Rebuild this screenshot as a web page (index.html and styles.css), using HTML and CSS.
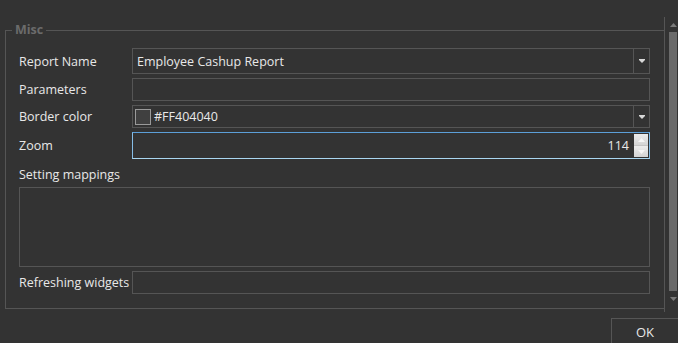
FILE: index.html
```html
<!DOCTYPE html>
<html lang="en">
<head>
    <meta charset="UTF-8">
    <title>Report Widget Properties</title>
    <link rel="stylesheet" href="styles.css">
</head>
<body>
    <div class="window">
        <div class="scroller">
            <div class="content">
                <fieldset class="group">
                    <legend>Misc</legend>
                    <div class="props">
                        <div class="prop-label">Report Name</div>
                        <div class="field combo tall">
                            <span class="value">Employee Cashup Report</span>
                            <span class="drop">
                                <svg width="6" height="4" viewBox="0 0 6 4"><path d="M0 0H6V1L3 4L0 1Z" fill="#d8d8d8"/></svg>
                            </span>
                        </div>

                        <div class="prop-label">Parameters</div>
                        <div class="field"></div>

                        <div class="prop-label">Border color</div>
                        <div class="field combo">
                            <span class="swatch"></span>
                            <span class="value">#FF404040</span>
                            <span class="drop">
                                <svg width="6" height="4" viewBox="0 0 6 4"><path d="M0 0H6V1L3 4L0 1Z" fill="#d8d8d8"/></svg>
                            </span>
                        </div>

                        <div class="prop-label">Zoom</div>
                        <div class="field spin focused">
                            <span class="value number">114</span>
                            <span class="spinner">
                                <span class="spin-btn">
                                    <svg width="7" height="4" viewBox="0 0 7 4"><path d="M3.5 0L7 4H0Z" fill="#f6f6f6"/></svg>
                                </span>
                                <span class="spin-btn">
                                    <svg width="7" height="4" viewBox="0 0 7 4"><path d="M0 0H7L3.5 4Z" fill="#f6f6f6"/></svg>
                                </span>
                            </span>
                        </div>

                        <div class="prop-label wide">Setting mappings</div>
                        <div class="field wide area"></div>

                        <div class="prop-label">Refreshing widgets</div>
                        <div class="field"></div>
                    </div>
                </fieldset>
            </div>
            <div class="vscroll">
                <svg width="7" height="4" viewBox="0 0 7 4"><path d="M3.5 0L7 4H0Z" fill="#7a7a7a"/></svg>
                <div class="thumb"></div>
                <svg width="7" height="4" viewBox="0 0 7 4"><path d="M0 0H7L3.5 4Z" fill="#7a7a7a"/></svg>
            </div>
        </div>
        <div class="footer">
            <button class="ok">OK</button>
        </div>
    </div>
</body>
</html>
```

FILE: styles.css
```css
html, body {
    margin: 0;
    padding: 0;
    background: #333333;
}

body {
    font-family: "Open Sans", "Noto Sans", sans-serif;
    font-size: 12.5px;
    color: #e8e8e8;
    width: 678px;
    height: 343px;
    overflow: hidden;
}

.window {
    display: flex;
    flex-direction: column;
}

.scroller {
    display: flex;
    margin-top: 17px;
    height: 295px;
}

.content {
    width: 664px;
}

.group {
    margin: 5px 0 0 5px;
    padding: 10px 13px 14px 13px;
    border: 1px solid #555555;
    border-right: none;
    min-width: 0;
}

.group legend {
    margin-left: -7px;
    padding: 0 3px;
    font-weight: bold;
    font-size: 12.5px;
    line-height: 16px;
    color: #6b6b6b;
}

.props {
    display: grid;
    grid-template-columns: 113px 518px;
    grid-template-rows: 26px 23px 23px 27px 20px 80px 23px;
    row-gap: 4px;
}

.prop-label {
    display: flex;
    align-items: center;
    white-space: nowrap;
}

.prop-label.wide {
    grid-column: 1 / 3;
    align-items: flex-start;
    padding-top: 4px;
    line-height: 16px;
}

.field {
    display: flex;
    align-items: center;
    border: 1px solid #555555;
    min-width: 0;
}

.field.wide {
    grid-column: 1 / 3;
}

.value {
    flex: 1;
    padding-left: 4px;
    white-space: nowrap;
}

.value.number {
    text-align: right;
    padding-right: 5px;
}

.combo .drop {
    align-self: stretch;
    width: 15px;
    border-left: 1px solid #555555;
    display: flex;
    align-items: center;
    justify-content: center;
}

.swatch {
    width: 14px;
    height: 14px;
    margin-left: 2px;
    border: 1px solid #9a9a9a;
    background: #404040;
}

.combo .swatch + .value {
    padding-left: 3px;
}

.focused {
    border-color: #5c9fd8;
    border-bottom-color: #a9d6f0;
    border-left-color: #86bde6;
    border-right-color: #86bde6;
}

.spinner {
    align-self: stretch;
    width: 14px;
    margin: 1px 1px 1px 0;
    display: flex;
    flex-direction: column;
}

.spin-btn {
    flex: 1;
    display: flex;
    align-items: center;
    justify-content: center;
    background: linear-gradient(#ececec, #d4d4d4);
}

.spin-btn + .spin-btn {
    border-top: 1px solid #c4c4c4;
}

.vscroll {
    width: 13px;
    border-left: 1px solid #555555;
    display: flex;
    flex-direction: column;
    align-items: center;
    padding: 6px 0 7px 0;
}

.vscroll svg {
    margin-left: 3px;
}

.thumb {
    width: 8px;
    margin: 5px 0 0 3px;
    height: 259px;
    background: #6a6a6a;
    margin-bottom: 6px;
}

.footer {
    display: flex;
    justify-content: flex-end;
    padding-top: 6px;
}

.ok {
    width: 68px;
    height: 27px;
    margin-right: -1px;
    background: #333333;
    border: 1px solid #555555;
    color: #e8e8e8;
    font-family: "Open Sans", "Noto Sans", sans-serif;
    font-size: 13px;
    padding: 0;
}
```
